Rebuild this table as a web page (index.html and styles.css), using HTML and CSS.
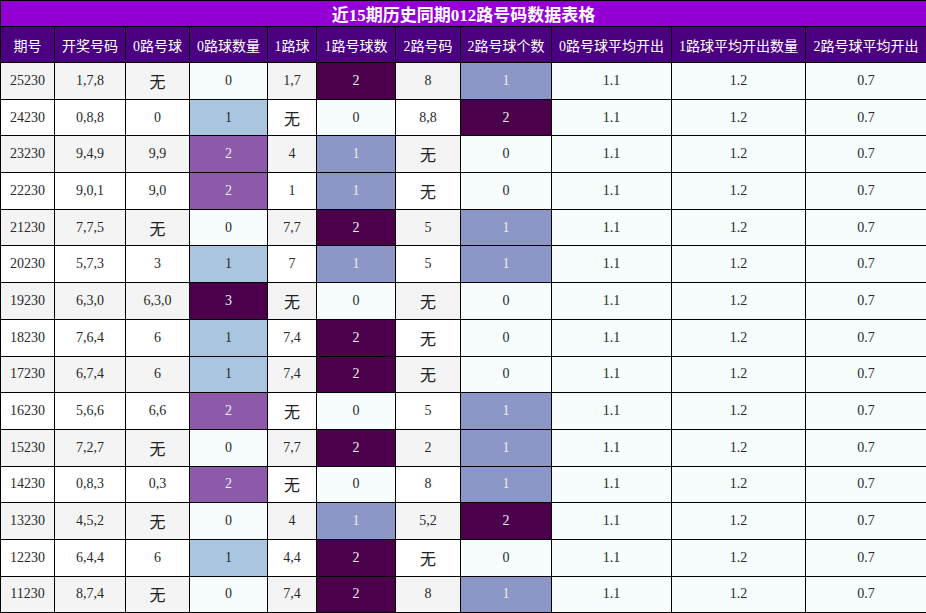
FILE: index.html
```html
<!DOCTYPE html>
<html>
<head>
<meta charset="utf-8">
<link rel="stylesheet" href="styles.css">
</head>
<body>
<table class="grid">
<colgroup>
<col class="w54"><col class="w71"><col class="w64"><col class="w78"><col class="w49"><col class="w79"><col class="w65"><col class="w91"><col class="w120"><col class="w134"><col class="w121">
</colgroup>
<thead>
<tr class="title"><th colspan="11">近15期历史同期012路号码数据表格</th></tr>
<tr class="head">
<th>期号</th><th>开奖号码</th><th>0路号球</th><th>0路球数量</th><th>1路球</th><th>1路号球数</th><th>2路号码</th><th>2路号球个数</th><th>0路号球平均开出</th><th>1路球平均开出数量</th><th>2路号球平均开出</th>
</tr>
</thead>
<tbody>
<tr class="odd"><td class="t">25230</td><td class="t">1,7,8</td><td class="t none">无</td><td class="c">0</td><td class="t">1,7</td><td class="c b2">2</td><td class="t">8</td><td class="c b1">1</td><td class="c">1.1</td><td class="c">1.2</td><td class="c">0.7</td></tr>
<tr class="even"><td class="t">24230</td><td class="t">0,8,8</td><td class="t">0</td><td class="c a1">1</td><td class="t none">无</td><td class="c">0</td><td class="t">8,8</td><td class="c b2">2</td><td class="c">1.1</td><td class="c">1.2</td><td class="c">0.7</td></tr>
<tr class="odd"><td class="t">23230</td><td class="t">9,4,9</td><td class="t">9,9</td><td class="c a2">2</td><td class="t">4</td><td class="c b1">1</td><td class="t none">无</td><td class="c">0</td><td class="c">1.1</td><td class="c">1.2</td><td class="c">0.7</td></tr>
<tr class="even"><td class="t">22230</td><td class="t">9,0,1</td><td class="t">9,0</td><td class="c a2">2</td><td class="t">1</td><td class="c b1">1</td><td class="t none">无</td><td class="c">0</td><td class="c">1.1</td><td class="c">1.2</td><td class="c">0.7</td></tr>
<tr class="odd"><td class="t">21230</td><td class="t">7,7,5</td><td class="t none">无</td><td class="c">0</td><td class="t">7,7</td><td class="c b2">2</td><td class="t">5</td><td class="c b1">1</td><td class="c">1.1</td><td class="c">1.2</td><td class="c">0.7</td></tr>
<tr class="even"><td class="t">20230</td><td class="t">5,7,3</td><td class="t">3</td><td class="c a1">1</td><td class="t">7</td><td class="c b1">1</td><td class="t">5</td><td class="c b1">1</td><td class="c">1.1</td><td class="c">1.2</td><td class="c">0.7</td></tr>
<tr class="odd"><td class="t">19230</td><td class="t">6,3,0</td><td class="t">6,3,0</td><td class="c a3">3</td><td class="t none">无</td><td class="c">0</td><td class="t none">无</td><td class="c">0</td><td class="c">1.1</td><td class="c">1.2</td><td class="c">0.7</td></tr>
<tr class="even"><td class="t">18230</td><td class="t">7,6,4</td><td class="t">6</td><td class="c a1">1</td><td class="t">7,4</td><td class="c b2">2</td><td class="t none">无</td><td class="c">0</td><td class="c">1.1</td><td class="c">1.2</td><td class="c">0.7</td></tr>
<tr class="odd"><td class="t">17230</td><td class="t">6,7,4</td><td class="t">6</td><td class="c a1">1</td><td class="t">7,4</td><td class="c b2">2</td><td class="t none">无</td><td class="c">0</td><td class="c">1.1</td><td class="c">1.2</td><td class="c">0.7</td></tr>
<tr class="even"><td class="t">16230</td><td class="t">5,6,6</td><td class="t">6,6</td><td class="c a2">2</td><td class="t none">无</td><td class="c">0</td><td class="t">5</td><td class="c b1">1</td><td class="c">1.1</td><td class="c">1.2</td><td class="c">0.7</td></tr>
<tr class="odd"><td class="t">15230</td><td class="t">7,2,7</td><td class="t none">无</td><td class="c">0</td><td class="t">7,7</td><td class="c b2">2</td><td class="t">2</td><td class="c b1">1</td><td class="c">1.1</td><td class="c">1.2</td><td class="c">0.7</td></tr>
<tr class="even"><td class="t">14230</td><td class="t">0,8,3</td><td class="t">0,3</td><td class="c a2">2</td><td class="t none">无</td><td class="c">0</td><td class="t">8</td><td class="c b1">1</td><td class="c">1.1</td><td class="c">1.2</td><td class="c">0.7</td></tr>
<tr class="odd"><td class="t">13230</td><td class="t">4,5,2</td><td class="t none">无</td><td class="c">0</td><td class="t">4</td><td class="c b1">1</td><td class="t">5,2</td><td class="c b2">2</td><td class="c">1.1</td><td class="c">1.2</td><td class="c">0.7</td></tr>
<tr class="even"><td class="t">12230</td><td class="t">6,4,4</td><td class="t">6</td><td class="c a1">1</td><td class="t">4,4</td><td class="c b2">2</td><td class="t none">无</td><td class="c">0</td><td class="c">1.1</td><td class="c">1.2</td><td class="c">0.7</td></tr>
<tr class="odd"><td class="t">11230</td><td class="t">8,7,4</td><td class="t none">无</td><td class="c">0</td><td class="t">7,4</td><td class="c b2">2</td><td class="t">8</td><td class="c b1">1</td><td class="c">1.1</td><td class="c">1.2</td><td class="c">0.7</td></tr>
</tbody>
</table>
</body>
</html>
```
FILE: styles.css
```css
html, body {
  margin: 0;
  padding: 0;
  background: #ffffff;
}
.grid {
  border-collapse: collapse;
  table-layout: fixed;
  width: 926px;
  font-family: "Liberation Serif", "Noto Sans CJK SC", serif;
  font-size: 14px;
  color: #2a2a2a;
}
.w54 { width: 54px; }
.w71 { width: 71px; }
.w64 { width: 64px; }
.w78 { width: 78px; }
.w49 { width: 49px; }
.w79 { width: 79px; }
.w65 { width: 65px; }
.w91 { width: 91px; }
.w120 { width: 120px; }
.w134 { width: 134px; }
.w121 { width: 121px; }
.grid th, .grid td {
  border: 1px solid #000000;
  text-align: center;
  padding: 0;
  white-space: nowrap;
  overflow: hidden;
}
.title th {
  background: #9400d3;
  color: #ffffff;
  font-size: 17px;
  font-weight: bold;
  height: 24px;
}
.head th {
  background: #4b0080;
  color: #ffffff;
  font-weight: normal;
  font-size: 14px;
  height: 35px;
}
.grid tbody tr {
  height: 36.7px;
}
.odd .t { background: #f4f4f4; }
.even .t { background: #ffffff; }
.t.none {
  font-family: "Noto Sans CJK SC", sans-serif;
  font-size: 16px;
  color: #222222;
}
.c { background: #f7fcfc; }
.a1 { background: #a9c5e0; }
.a2 { background: #8c5aa8; color: #eeeeee; }
.a3, .b2 { background: #4b004b; color: #eeeeee; }
.b1 { background: #8c97c8; color: #eeeeee; }
```
